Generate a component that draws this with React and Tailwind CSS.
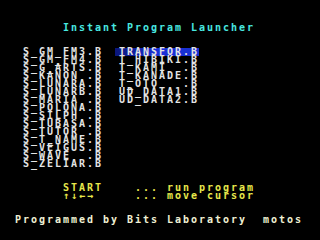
import React from "react";

const leftFiles = [
  "S_GM_FM3.B",
  "S_GM_FM4.B",
  "S_G_ARTS.B",
  "S_KANON .B",
  "S_LUNARA.B",
  "S_LUNARB.B",
  "S_MARIA .B",
  "S_POLONA.B",
  "S_SILPH .B",
  "S_TUBASA.B",
  "S_TUTOR .B",
  "S_T_NAME.B",
  "S_VEIGUS.B",
  "S_WAVE  .B",
  "S_ZELIAR.B",
];

const rightFiles = [
  "TRANSFOR.B",
  "T_HIBIKI.B",
  "T_KAMI  .B",
  "T_KANADE.B",
  "T_OTO   .B",
  "UD_DATA1.B",
  "UD_DATA2.B",
];

// one text row of the 8px character grid
function Row({ children, className = "" }) {
  return (
    <div className={`h-[8px] leading-[8px] whitespace-pre ${className}`}>
      {children}
    </div>
  );
}

export default function App() {
  return (
    <div className="w-[320px] h-[240px] overflow-hidden bg-black pl-[15px] pt-[24px] font-['DejaVu_Sans_Mono',monospace] text-[10px] font-bold tracking-[1.98px]">
      <Row className="ml-[48px] text-[#48e8e0]">Instant Program Launcher</Row>

      <div className="mt-[16px] flex gap-[16px] pl-[8px] text-[#e4e4e4]">
        <div className="flex flex-col">
          {leftFiles.map((f) => (
            <Row key={f}>{f}</Row>
          ))}
        </div>
        <div className="flex flex-col">
          {rightFiles.map((f, i) =>
            i === 0 ? (
              <Row
                key={f}
                className="-ml-[4px] pl-[4px] bg-gradient-to-r from-[#0a1678] via-[#1a30d8] to-[#1830d0]"
              >
                {f}
              </Row>
            ) : (
              <Row key={f}>{f}</Row>
            )
          )}
        </div>
      </div>

      <div className="mt-[16px] ml-[48px] text-[#e8e84c]">
        <Row>{"START    ... run program"}</Row>
        <Row>{"↑↓←→     ... move cursor"}</Row>
      </div>

      <Row className="mt-[16px] text-[#f0f0d4]">
        {"Programmed by Bits Laboratory  motos"}
      </Row>
    </div>
  );
}
